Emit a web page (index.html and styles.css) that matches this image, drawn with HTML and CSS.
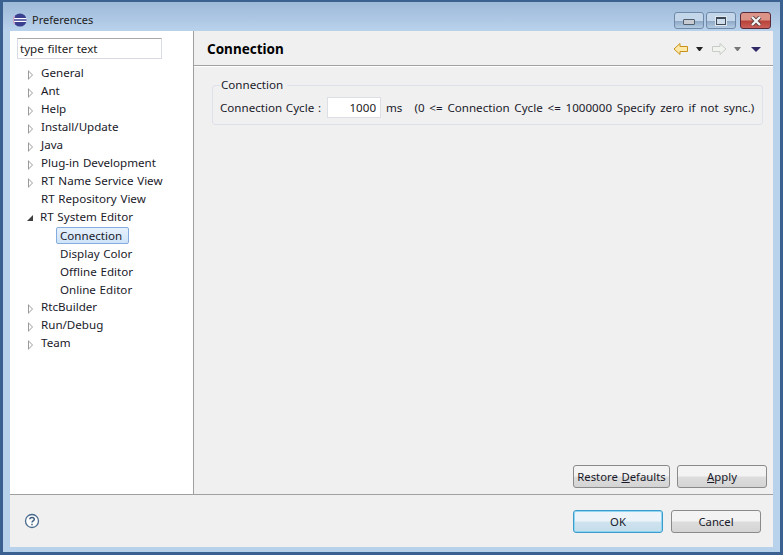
FILE: index.html
```html
<!DOCTYPE html>
<html lang="en">
    <head>
        <meta charset="UTF-8" />
        <title>Preferences</title>
        <link rel="stylesheet" href="styles.css">
    </head>
    <body>
        <div class="window">
            <div class="title_bar">
                <svg class="app_icon" width="14" height="14" viewBox="0 0 16 16">
                    <circle cx="8" cy="8" r="7.500" fill="#3b3f8f" />
                    <path d="M0.500 6.500h15M0.500 9.500h15" stroke="#fff" stroke-width="1.300" />
                    <path d="M2 3.500A7.500 7.500 0 0 0 2 12.500" fill="none" stroke="#c9a0c9" stroke-width="1.500" />
                </svg>
                <span class="title_text">Preferences</span>
                <div class="win_btns">
                    <div class="win_btn"><span class="min_glyph"></span></div>
                    <div class="win_btn"><span class="max_glyph"></span></div>
                    <div class="win_btn close_btn">
                        <svg width="14" height="10" viewBox="0 0 14 10">
                            <path d="M3 1l8 8M11 1l-8 8" stroke="#5a3a3a" stroke-width="4" />
                            <path d="M3 1l8 8M11 1l-8 8" stroke="#f4f4f4" stroke-width="2.400" />
                        </svg>
                    </div>
                </div>
            </div>

            <div class="content">
                <div class="main_row">
                    <div class="sidebar">
                        <input class="filter_input" type="text" value="type filter text" />
                        <ul class="tree">
                            <li><span class="arrow"></span>General</li>
                            <li><span class="arrow"></span>Ant</li>
                            <li><span class="arrow"></span>Help</li>
                            <li><span class="arrow"></span>Install/Update</li>
                            <li><span class="arrow"></span>Java</li>
                            <li><span class="arrow"></span>Plug-in Development</li>
                            <li><span class="arrow"></span>RT Name Service View</li>
                            <li><span class="arrow none"></span>RT Repository View</li>
                            <li><span class="arrow open"></span>RT System Editor</li>
                            <li class="child"><span class="selected">Connection</span></li>
                            <li class="child"><span>Display Color</span></li>
                            <li class="child"><span>Offline Editor</span></li>
                            <li class="child"><span>Online Editor</span></li>
                            <li><span class="arrow"></span>RtcBuilder</li>
                            <li><span class="arrow"></span>Run/Debug</li>
                            <li><span class="arrow"></span>Team</li>
                        </ul>
                    </div>

                    <div class="panel">
                        <div class="panel_header">
                            <h1>Connection</h1>
                            <div class="nav_icons">
                                <svg width="16" height="14" viewBox="0 0 16 14">
                                    <path d="M1 7l6-5.500V4.500h7.500v5H7v3z" fill="#ffe9a8" stroke="#c8921a" stroke-linejoin="round" />
                                </svg>
                                <span class="drop dark"></span>
                                <svg class="nav_fwd" width="16" height="14" viewBox="0 0 16 14">
                                    <path d="M15 7L9 1.500V4.500H1.500v5H9v3z" fill="#f1f3ef" stroke="#c6cbc6" stroke-linejoin="round" />
                                </svg>
                                <span class="drop grey"></span>
                                <span class="drop navy"></span>
                            </div>
                        </div>

                        <div class="panel_body">
                            <fieldset class="group">
                                <legend>Connection</legend>
                                <div class="group_row">
                                    <span>Connection Cycle :</span>
                                    <input class="cycle_input" type="text" value="1000" />
                                    <span class="unit">ms</span>
                                    <span class="hint">(0 &lt;= Connection Cycle &lt;= 1000000 Specify zero if not sync.)</span>
                                </div>
                            </fieldset>
                        </div>

                        <div class="panel_btns">
                            <button class="btn restore_btn">Restore <u>D</u>efaults</button>
                            <button class="btn"><u>A</u>pply</button>
                        </div>
                    </div>
                </div>

                <div class="footer">
                    <svg width="16" height="16" viewBox="0 0 16 16">
                        <circle cx="8" cy="8" r="6.500" fill="#fff" stroke="#4a6a8c" stroke-width="1.300" />
                        <path d="M5.800 6.300C5.800 3.800 10.300 3.800 10.300 6.300C10.300 8 8 7.800 8 9.600" fill="none" stroke="#3c5a7c" stroke-width="1.400" />
                        <path d="M8 10.800v1.500" stroke="#3c5a7c" stroke-width="1.400" />
                    </svg>
                    <div class="footer_btns">
                        <button class="btn default_btn">OK</button>
                        <button class="btn">Cancel</button>
                    </div>
                </div>
            </div>
        </div>
    </body>
</html>
```

FILE: styles.css
```css
html, body {
    margin: 0;
    background-color: #ffffff;
}

body {
    font-family: "Noto Sans", sans-serif;
    font-size: 11.6px;
    word-spacing: 0.7px;
    color: #1a1a2a;
}

.window {
    box-sizing: border-box;
    width: 783px;
    height: 555px;
    border: 3px solid #3a6190;
    border-top-width: 2px;
    background: #b9d2ec;
    display: flex;
    flex-direction: column;
}

.title_bar {
    box-sizing: border-box;
    height: 29px;
    padding: 10px 9px 0 10px;
    display: flex;
    align-items: flex-start;
    background: linear-gradient(#9db9d8, #b9d2ec);
}

.app_icon {
    margin: 1px 5px 0 0;
}

.title_text {
    font-size: 11px;
    line-height: 14px;
    margin-top: 1px;
    color: #222;
}

.win_btns {
    margin-left: auto;
    display: flex;
    gap: 2px;
}

.win_btn {
    box-sizing: border-box;
    width: 30px;
    height: 17px;
    border: 1px solid #6f8aa8;
    border-radius: 3px;
    background: linear-gradient(#c4d6ea 50%, #8fa9c6 55%, #b4cbe2);
    display: flex;
    align-items: center;
    justify-content: center;
}

.close_btn {
    margin-left: 2px;
    width: 31px;
    border-color: #5a2a3a;
    background: linear-gradient(#dc9388 45%, #b9433a 55%, #c9605a);
}

.min_glyph {
    width: 10px;
    height: 4px;
    margin-top: 3px;
    background: #c8ccd2;
    border: 1px solid #50606f;
    border-radius: 1px;
}

.max_glyph {
    box-sizing: border-box;
    width: 10px;
    height: 8px;
    border: 1px solid #3c4a5a;
    border-top-width: 2px;
    outline: 1px solid #dfe6ee;
    background: #cfdcea;
}

.content {
    flex: 1;
    margin: 0 7px 5px 7px;
    display: flex;
    flex-direction: column;
    background-color: #f0f0f0;
}

.main_row {
    height: 463px;
    display: flex;
    border-bottom: 1px solid #a0a0a0;
}

.sidebar {
    box-sizing: border-box;
    width: 184px;
    padding: 7px 0 0 7px;
    background-color: #ffffff;
    border-right: 1px solid #a0a0a0;
}

.filter_input {
    box-sizing: border-box;
    display: block;
    width: 145px;
    height: 21px;
    padding: 0 2px 1px 2px;
    border: 1px solid #d8dbe4;
    border-top-color: #a8a8a8;
    font: inherit;
    word-spacing: inherit;
    color: #222;
}

.tree {
    list-style: none;
    margin: 5px 0 0 0;
    padding: 0;
}

.tree li {
    height: 18px;
    line-height: 18px;
    display: flex;
    align-items: center;
    white-space: nowrap;
}

.arrow {
    position: relative;
    box-sizing: content-box;
    width: 0;
    height: 0;
    margin: 3px 8px 0 11px;
    border-left: 5px solid #9a9a9a;
    border-top: 5px solid transparent;
    border-bottom: 5px solid transparent;
}

/* white middle, the closed arrows are only an outline */
.arrow::after {
    content: "";
    position: absolute;
    left: -4px;
    top: -3px;
    border-left: 3px solid #ffffff;
    border-top: 3px solid transparent;
    border-bottom: 3px solid transparent;
}

.arrow.none {
    border-color: transparent;
}

.arrow.none::after,
.arrow.open::after {
    display: none;
}

.arrow.open {
    margin: 2px 7px 0 10px;
    border-left: 6px solid transparent;
    border-top: 0;
    border-bottom: 6px solid #404040;
}

.tree .child span {
    box-sizing: border-box;
    margin: 1px 0 0 39px;
    padding: 0 6px 0 3px;
    height: 17px;
    line-height: 15px;
    border: 1px solid transparent;
}

.tree .child .selected {
    background: linear-gradient(#e6f1fc, #cfe4f9);
    border-color: #84acdd;
    border-radius: 2px;
}

.panel {
    flex: 1;
    display: flex;
    flex-direction: column;
}

.panel_header {
    height: 34px;
    display: flex;
    align-items: center;
    justify-content: space-between;
    border-bottom: 1px solid #a0a0a0;
    box-shadow: 0 1px 0 #ffffff;
}

h1 {
    margin: 2px 0 0 13px;
    font-size: 13.5px;
    font-weight: bold;
    color: #000;
}

.nav_icons {
    display: flex;
    align-items: center;
    margin: 2px 12px 0 0;
}

.nav_fwd {
    margin-left: 8px;
}

.drop {
    width: 1px;
    margin-left: 7px;
    border-left: 3px solid transparent;
    border-right: 3px solid transparent;
    border-top: 4px solid #222;
}

.drop.grey {
    border-top-color: #777;
}

.drop.navy {
    width: 0;
    margin-left: 10px;
    border-left-width: 5px;
    border-right-width: 5px;
    border-top: 5px solid #2f2a66;
}

.panel_body {
    flex: 1;
    padding: 11px 10px 0 18px;
}

.group {
    box-sizing: border-box;
    height: 48px;
    margin: 0;
    padding: 0 0 0 7px;
    border: 1px solid #dde2ea;
    border-radius: 3px;
}

.group legend {
    padding: 0 4px 0 1px;
    line-height: 16px;
}

.group_row {
    margin-top: 4px;
    display: flex;
    align-items: center;
    white-space: nowrap;
}

.cycle_input {
    box-sizing: border-box;
    width: 54px;
    height: 21px;
    margin-left: 6px;
    padding: 0 4px;
    border: 1px solid #dcdfe6;
    text-align: right;
    font: inherit;
    color: #222;
}

.unit {
    margin-left: 5px;
}

.hint {
    margin-left: 12px;
    word-spacing: 1.800px;
}

.panel_btns {
    padding: 0 6px 6px 0;
    display: flex;
    justify-content: flex-end;
    gap: 7px;
}

.btn {
    box-sizing: border-box;
    width: 90px;
    height: 23px;
    padding: 0 0 1px 0;
    border: 1px solid #8a8a8a;
    border-radius: 3px;
    background: linear-gradient(#f3f3f3 45%, #dcdcdc 55%, #d4d4d4);
    font: inherit;
    font-size: 11.3px;
    word-spacing: inherit;
    color: #1a1a2a;
}

.restore_btn {
    width: 97px;
}

.default_btn {
    border-color: #3c9ccc;
    background: linear-gradient(#ecf4f9 45%, #cfe3ee 55%, #c4dcea);
    box-shadow: inset 0 0 0 1px #8fd6f2;
}

.footer {
    flex: 1;
    padding: 15px 12px 0 14px;
    display: flex;
    justify-content: space-between;
    align-items: flex-start;
}

.footer svg {
    margin-top: 3px;
}

.footer_btns {
    display: flex;
    gap: 8px;
}
```
